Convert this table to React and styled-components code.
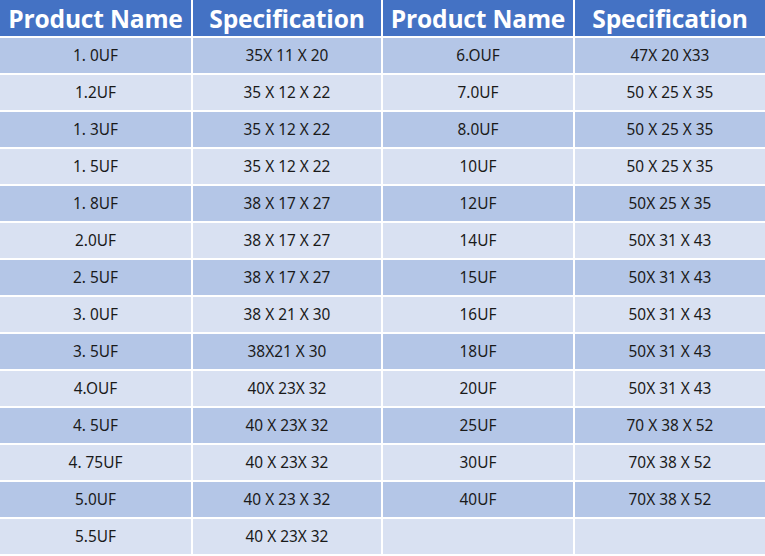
import React from "react";
import styled, { createGlobalStyle } from "styled-components";

const Global = createGlobalStyle`
  html, body { margin: 0; padding: 0; background: #fff; }
`;

const Grid = styled.div`
  display: grid;
  grid-template-columns: 191px 188px 190px 190px;
  grid-template-rows: 36px repeat(14, 35px);
  gap: 2px;
  width: 765px;
  height: 556px;
  background: #fff;
`;

const Head = styled.div`
  background: #4472c4;
  color: #fff;
  font-family: "Open Sans", "Noto Sans", sans-serif;
  font-weight: 700;
  font-size: 24.6px;
  display: flex;
  align-items: center;
  justify-content: center;
  letter-spacing: -0.2px;
`;

const Cell = styled.div`
  background: ${(p) => (p.$dark ? "#b4c6e7" : "#d9e1f2")};
  color: #1a1a1a;
  font-family: "Noto Sans", "Open Sans", sans-serif;
  font-size: 15.4px;
  display: flex;
  align-items: center;
  justify-content: center;
`;

const left = [
  ["1. 0UF", "35X 11 X 20"],
  ["1.2UF", "35 X 12 X 22"],
  ["1. 3UF", "35 X 12 X 22"],
  ["1. 5UF", "35 X 12 X 22"],
  ["1. 8UF", "38 X 17 X 27"],
  ["2.0UF", "38 X 17 X 27"],
  ["2. 5UF", "38 X 17 X 27"],
  ["3. 0UF", "38 X 21 X 30"],
  ["3. 5UF", "38X21 X 30"],
  ["4.OUF", "40X 23X 32"],
  ["4. 5UF", "40 X 23X 32"],
  ["4. 75UF", "40 X 23X 32"],
  ["5.0UF", "40 X 23 X 32"],
  ["5.5UF", "40 X 23X 32"],
];

const right = [
  ["6.OUF", "47X 20 X33"],
  ["7.0UF", "50 X 25 X 35"],
  ["8.0UF", "50 X 25 X 35"],
  ["10UF", "50 X 25 X 35"],
  ["12UF", "50X 25 X 35"],
  ["14UF", "50X 31 X 43"],
  ["15UF", "50X 31 X 43"],
  ["16UF", "50X 31 X 43"],
  ["18UF", "50X 31 X 43"],
  ["20UF", "50X 31 X 43"],
  ["25UF", "70 X 38 X 52"],
  ["30UF", "70X 38 X 52"],
  ["40UF", "70X 38 X 52"],
  ["", ""],
];

export default function App() {
  return (
    <>
      <Global />
      <Grid>
        <Head>Product Name</Head>
        <Head>Specification</Head>
        <Head>Product Name</Head>
        <Head>Specification</Head>
        {left.map((l, i) => {
          const r = right[i];
          const dark = i % 2 === 0;
          return (
            <React.Fragment key={i}>
              <Cell $dark={dark}>{l[0]}</Cell>
              <Cell $dark={dark}>{l[1]}</Cell>
              <Cell $dark={dark}>{r[0]}</Cell>
              <Cell $dark={dark}>{r[1]}</Cell>
            </React.Fragment>
          );
        })}
      </Grid>
    </>
  );
}
